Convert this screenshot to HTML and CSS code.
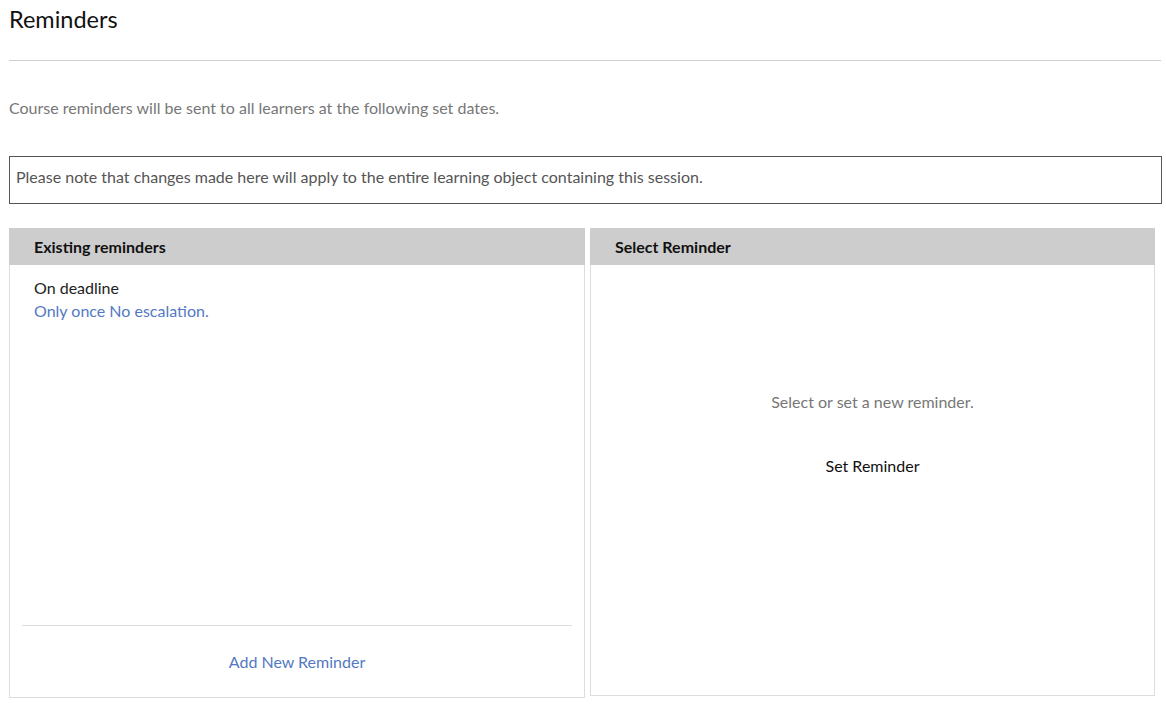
FILE: index.html
```html
<!DOCTYPE html>
<html>
<head>
<meta charset="utf-8">
<link rel="stylesheet" href="styles.css">
</head>
<body>
<div class="page">
  <h1 class="title">Reminders</h1>
  <hr class="rule">
  <p class="intro">Course reminders will be sent to all learners at the following set dates.</p>
  <div class="notice">Please note that changes made here will apply to the entire learning object containing this session.</div>
  <div class="panels">
    <section class="panel panel-left">
      <div class="panel-head">Existing reminders</div>
      <div class="panel-body">
        <div class="reminder">
          <div class="reminder-name">On deadline</div>
          <a class="reminder-link">Only once No escalation.</a>
        </div>
      </div>
      <div class="panel-foot">
        <a class="add-link">Add New Reminder</a>
      </div>
    </section>
    <section class="panel panel-right">
      <div class="panel-head">Select Reminder</div>
      <div class="empty">
        <p class="empty-text">Select or set a new reminder.</p>
        <button class="set-btn">Set Reminder</button>
      </div>
    </section>
  </div>
</div>
</body>
</html>
```
FILE: styles.css
```css
* { box-sizing: border-box; }
html, body { margin: 0; padding: 0; background: #fff; }
body {
  font-family: "Lato", "Liberation Sans", sans-serif;
  font-size: 16px;
  color: #222;
}
.page {
  padding: 0 5px 0 9px;
}
.title {
  margin: 0;
  padding-top: 5px;
  font-size: 23.5px;
  font-weight: 400;
  line-height: 28px;
  color: #111;
}
.rule {
  margin: 27px 0 0 0;
  border: 0;
  border-top: 1px solid #cfcfcf;
  width: 1152px;
}
.intro {
  margin: 36px 0 0 0;
  line-height: 22px;
  color: #777;
}
.notice {
  margin-top: 37px;
  width: 1153px;
  height: 48px;
  border: 1px solid #555;
  padding: 0 6px 8px;
  display: flex;
  align-items: center;
  color: #555;
}
.panels {
  margin-top: 24px;
  display: flex;
  gap: 5px;
  align-items: flex-start;
}
.panel {
  border: 1px solid #ddd;
  border-top: 0;
  display: flex;
  flex-direction: column;
}
.panel-left { width: 576px; height: 470px; }
.panel-right { width: 565px; height: 468px; }
.panel-head {
  background: #cdcdcd;
  height: 37px;
  margin: 0 -1px;
  padding: 0 25px;
  display: flex;
  align-items: center;
  font-weight: 700;
  color: #111;
}
.panel-body {
  flex: 1;
  padding: 11px 24px;
}
.reminder-name { line-height: 23px; color: #222; }
.reminder-link { display: block; line-height: 23px; color: #5379c2; cursor: pointer; }
.panel-foot {
  margin: 0 12px;
  border-top: 1px solid #ddd;
  height: 72px;
  display: flex;
  align-items: center;
  justify-content: center;
}
.add-link { color: #5379c2; cursor: pointer; }
.empty {
  flex: 1;
  display: flex;
  flex-direction: column;
  align-items: center;
  padding-top: 126px;
}
.empty-text {
  margin: 0;
  line-height: 22px;
  color: #777;
}
.set-btn {
  margin-top: 42px;
  border: 0;
  background: none;
  font: inherit;
  color: #111;
  line-height: 22px;
  padding: 0;
}
```
